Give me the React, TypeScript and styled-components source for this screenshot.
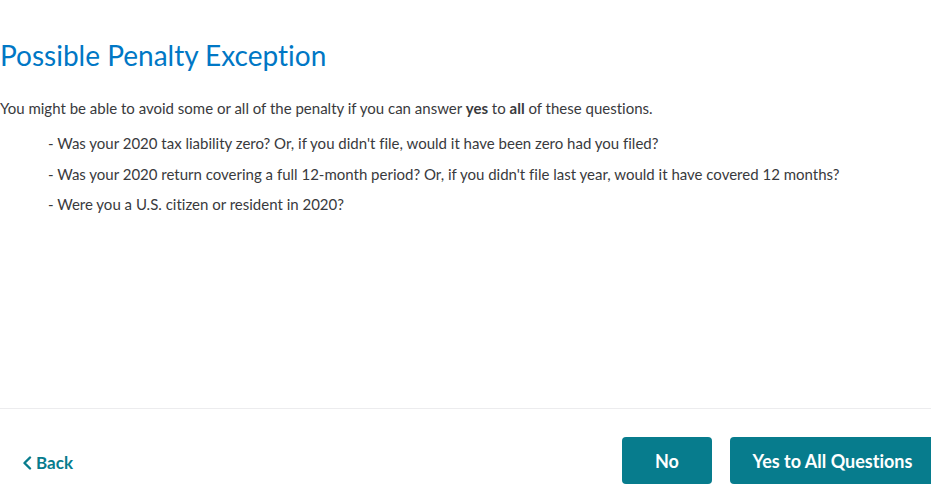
import {FunctionComponent} from 'react'
import styled, {createGlobalStyle} from 'styled-components'

const GlobalStyle = createGlobalStyle`
  html, body {
    margin: 0;
    padding: 0;
    background: #ffffff;
  }
  body {
    font-family: Lato, "Open Sans", "Liberation Sans", sans-serif;
    font-variant-ligatures: none;
    color: #393a3d;
  }
`

const Page = styled.div`
  display: flex;
  flex-direction: column;
  height: 493px;
  overflow: hidden;
`

const Main = styled.main`
  flex: 1;
  padding-top: 37px;
`

const Title = styled.h1`
  margin: 0 0 25px;
  font-size: 28px;
  font-weight: 400;
  line-height: 36px;
  color: #0077c5;
`

const Intro = styled.p`
  margin: 0 0 15px;
  font-size: 15px;
  line-height: 20px;
`

const QuestionList = styled.ul`
  list-style: none;
  margin: 0;
  padding: 0 0 0 48px;
  display: flex;
  flex-direction: column;
  gap: 10.5px;
`

const Question = styled.li`
  font-size: 15px;
  line-height: 20px;
`

const Footer = styled.footer`
  height: 85px;
  box-sizing: border-box;
  border-top: 1px solid #ececee;
  padding: 28px 0 0 22px;
  display: flex;
  align-items: flex-start;
  justify-content: space-between;
`

const BackLink = styled.a`
  display: flex;
  align-items: center;
  gap: 4px;
  margin-top: 15px;
  font-size: 17px;
  font-weight: 700;
  color: #077c8d;
  text-decoration: none;
  cursor: pointer;
`

const Actions = styled.div`
  display: flex;
  gap: 18px;
  margin-right: -4px;
`

const ActionButton = styled.button<{$wide?: boolean}>`
  height: 47px;
  min-width: ${p => (p.$wide ? '205px' : '90px')};
  padding: 0 22px;
  border: none;
  border-radius: 4px;
  background: #077c8d;
  color: #ffffff;
  font-family: inherit;
  font-variant-ligatures: none;
  font-size: 18px;
  font-weight: 700;
  cursor: pointer;
`

const questions = [
    "- Was your 2020 tax liability zero? Or, if you didn't file, would it have been zero had you filed?",
    "- Was your 2020 return covering a full 12-month period? Or, if you didn't file last year, would it have covered 12 months?",
    '- Were you a U.S. citizen or resident in 2020?',
]

const App: FunctionComponent = () => (
    <>
        <GlobalStyle/>
        <Page>
            <Main>
                <Title>Possible Penalty Exception</Title>
                <Intro>
                    You might be able to avoid some or all of the penalty if you can answer <b>yes</b> to <b>all</b> of
                    these questions.
                </Intro>
                <QuestionList>
                    {questions.map(q => <Question key={q}>{q}</Question>)}
                </QuestionList>
            </Main>
            <Footer>
                <BackLink>
                    <svg width="10" height="14" viewBox="0 0 10 14" fill="none">
                        <path d="M8 1.5L2.5 7L8 12.5" stroke="currentColor" strokeWidth="2.4"
                              strokeLinecap="round" strokeLinejoin="round"/>
                    </svg>
                    Back
                </BackLink>
                <Actions>
                    <ActionButton>No</ActionButton>
                    <ActionButton $wide>Yes to All Questions</ActionButton>
                </Actions>
            </Footer>
        </Page>
    </>
)

export default App
